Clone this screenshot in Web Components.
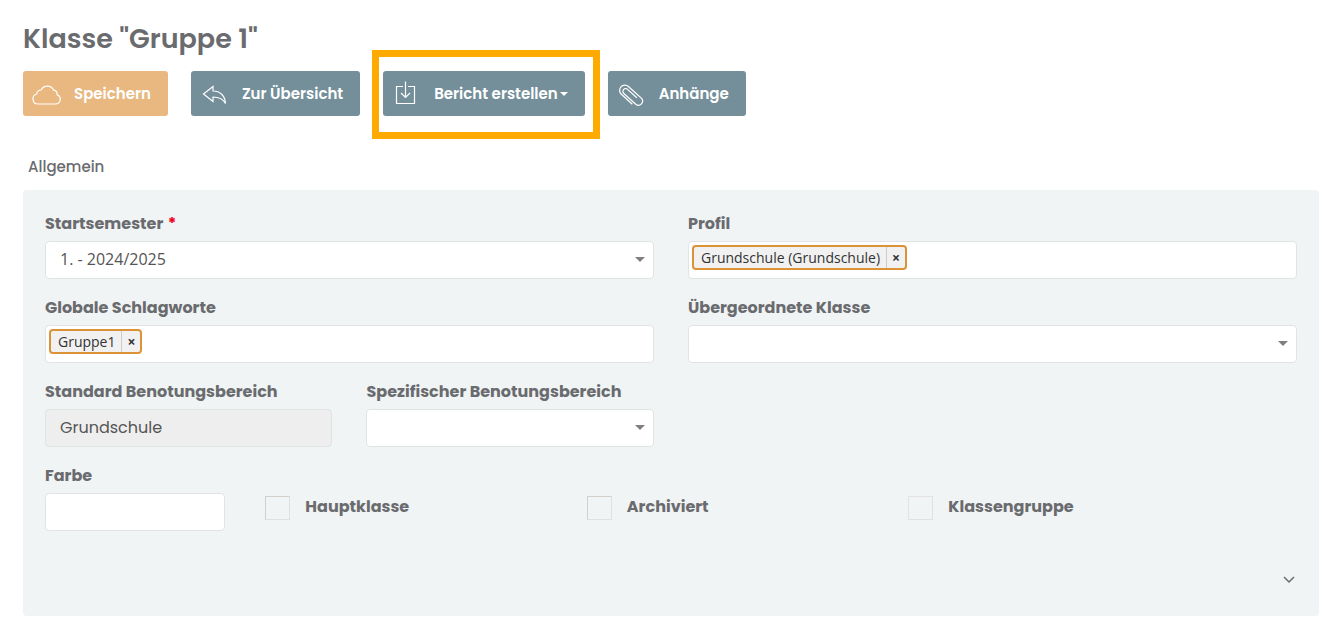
<!DOCTYPE html>
<html lang="de">
<head>
<meta charset="utf-8">
<meta name="viewport" content="width=device-width, initial-scale=1">
<title>Klasse "Gruppe 1"</title>
<style>
    body {
        margin: 0;
        background: #fff;
        color: #6a6b6e;
        font-family: Poppins, Inter, sans-serif;
        font-size: 16px;
    }
</style>
</head>
<body>
<class-page>
    <span slot="title">Klasse "Gruppe 1"</span>

    <tool-button slot="tools" icon="cloud" variant="save">Speichern</tool-button>
    <tool-button slot="tools" icon="back">Zur Übersicht</tool-button>
    <tool-button slot="tools" icon="download" caret marked>Bericht erstellen</tool-button>
    <tool-button slot="tools" icon="clip">Anhänge</tool-button>

    <form-panel heading="Allgemein">
        <select-field label="Startsemester" value="1. - 2024/2025" required></select-field>
        <tag-field label="Profil" tag="Grundschule (Grundschule)"></tag-field>
        <tag-field label="Globale Schlagworte" tag="Gruppe1"></tag-field>
        <select-field label="Übergeordnete Klasse"></select-field>
        <text-field class="quarter" label="Standard Benotungsbereich" value="Grundschule" disabled></text-field>
        <select-field class="quarter" label="Spezifischer Benotungsbereich"></select-field>
        <text-field class="small" label="Farbe"></text-field>
        <check-field class="quarter">Hauptklasse</check-field>
        <check-field class="quarter">Archiviert</check-field>
        <check-field class="quarter faint">Klassengruppe</check-field>
    </form-panel>
</class-page>

<script>
const icons = {
    cloud: `<path d="M6 25h17.500a4.800 4.800 0 0 0 1.600-9.300 4.200 4.200 0 0 0-3.400-4.500 7 7 0 0 0-12.600-.2 4.200 4.200 0 0 0-4.400 4A5.100 5.100 0 0 0 6 25z"/>`,
    back: `<path d="M3.500 15 13 7.500V12c7 0 12 4.500 12.500 12.500C23 19.500 19 18 13 18v4.500z"/>`,
    download: `<path d="M11 7.500H4.500v17h18v-17H16M13.500 2.500v16M9 14l4.500 4.500L18 14"/>`,
    clip: `<path transform="translate(7.500 4) rotate(42)" d="M20 10.500H5.200a5.200 5.200 0 0 1 0-10.500H23a4.200 4.200 0 0 1 0 8.300H6.500a2.800 2.800 0 0 1 0-5.600H19"/>`
};

class ClassPage extends HTMLElement {
    constructor () {
        super();
        this.attachShadow({ mode: 'open' }).innerHTML = `
            <style>
                :host {
                    display: block;
                    padding: 19px 22px 18px 23px;
                }

                h1 {
                    margin: 0 0 12px;
                    font-size: 27px;
                    font-weight: 600;
                    line-height: 40px;
                }

                .tools {
                    display: flex;
                    flex-wrap: wrap;
                    gap: 23px;
                    margin-bottom: 39px;
                }
            </style>
            <h1><slot name="title"></slot></h1>
            <div class="tools"><slot name="tools"></slot></div>
            <slot></slot>
        `;
    }
}

class ToolButton extends HTMLElement {
    constructor () {
        super();
        this.attachShadow({ mode: 'open' }).innerHTML = `
            <style>
                :host {
                    display: block;
                    position: relative;
                }

                button {
                    display: flex;
                    align-items: center;
                    gap: 12px;
                    height: 45px;
                    padding: 0 17px 0 9px;
                    border: 0;
                    border-radius: 3px;
                    background: #748f9a;
                    color: #fff;
                    font: inherit;
                    font-size: 15px;
                    font-weight: 600;
                    white-space: nowrap;
                    cursor: pointer;
                }

                :host([variant=save]) button {
                    background: #e9b780;
                }

                .icon {
                    width: 30px;
                    height: 30px;
                    fill: none;
                    stroke: #fff;
                    stroke-width: 1.200;
                }

                .text {
                    display: flex;
                    align-items: center;
                    gap: 2px;
                    line-height: 24px;
                }

                .caret {
                    border: 4px solid transparent;
                    border-top-color: #fff;
                    border-bottom: 0;
                }

                /* frame drawn around the button */
                .mark {
                    position: absolute;
                    inset: -21px -15px -23px -11px;
                    border: 7px solid #ffaa00;
                    pointer-events: none;
                }
            </style>
            <button type="button">
                <svg class="icon" viewBox="0 0 30 30" aria-hidden="true">${icons[this.getAttribute('icon')]}</svg>
                <span class="text"><slot></slot>${this.hasAttribute('caret') ? '<i class="caret"></i>' : ''}</span>
            </button>
            ${this.hasAttribute('marked') ? '<div class="mark"></div>' : ''}
        `;
    }
}

class FormPanel extends HTMLElement {
    constructor () {
        super();
        this.attachShadow({ mode: 'open' }).innerHTML = `
            <style>
                :host {
                    display: block;
                }

                h2 {
                    margin: 0 5px 11px;
                    font-size: 15px;
                    font-weight: 500;
                    line-height: 24px;
                }

                .panel {
                    padding: 23px 22px 25px;
                    border-radius: 4px;
                    background: #f0f4f5;
                }

                .grid {
                    display: grid;
                    grid-template-columns: repeat(12, minmax(0, 1fr));
                    gap: 18px 34px;
                }

                ::slotted(*) {
                    grid-column: span 6;
                }

                ::slotted(.quarter) {
                    grid-column: span 3;
                }

                ::slotted(.small) {
                    grid-column: 1 / span 2;
                }

                .more {
                    display: block;
                    width: 16px;
                    height: 24px;
                    margin: 36px 0 0 auto;
                    padding: 0;
                    border: 0;
                    background: none;
                    cursor: pointer;
                }

                .more svg {
                    display: block;
                    width: 16px;
                    height: 24px;
                    fill: none;
                    stroke: #6a6b6e;
                    stroke-width: 1.500;
                }
            </style>
            <h2>${this.getAttribute('heading')}</h2>
            <div class="panel">
                <div class="grid"><slot></slot></div>
                <button class="more" type="button" aria-label="Mehr">
                    <svg viewBox="0 0 16 24"><path d="m3 10 5 5 5-5"/></svg>
                </button>
            </div>
        `;
    }
}

const fieldStyle = `
    :host {
        display: block;
    }

    label {
        display: block;
        margin-bottom: 7px;
        font-weight: 700;
        line-height: 21px;
    }

    .required {
        margin-left: 1px;
        color: #f00020;
    }

    .control {
        box-sizing: border-box;
        width: 100%;
        height: 38px;
        padding: 0 14px;
        border: 1px solid #e1e4e5;
        border-radius: 4px;
        background: #fff;
        color: #555;
        font: inherit;
    }
`;

class FormField extends HTMLElement {
    constructor () {
        super();
        const star = this.hasAttribute('required') ? ' <span class="required">*</span>' : '';
        this.attachShadow({ mode: 'open' }).innerHTML = `
            <style>${fieldStyle}</style>
            <label for="field">${this.getAttribute('label')}${star}</label>
            ${this.control(this.getAttribute('value') || '')}
        `;
    }
}

class TextField extends FormField {
    control (value) {
        return `
            <style>
                .control:disabled {
                    padding-bottom: 2px;
                    background: #eee;
                }
            </style>
            <input class="control" id="field" type="text" value="${value}" ${this.hasAttribute('disabled') ? 'disabled' : ''}>
        `;
    }
}

class SelectField extends FormField {
    control (value) {
        return `
            <style>
                .box {
                    display: grid;
                    align-items: center;
                }

                .box > * {
                    grid-area: 1 / 1;
                }

                .box select {
                    appearance: none;
                    padding-bottom: 2px;
                    font-family: "Open Sans", sans-serif;
                }

                .arrow {
                    justify-self: end;
                    margin: 0 9px 2px 0;
                    border: 5px solid transparent;
                    border-top-color: #808080;
                    border-bottom: 0;
                    pointer-events: none;
                }
            </style>
            <div class="box">
                <select class="control" id="field"><option>${value}</option></select>
                <i class="arrow"></i>
            </div>
        `;
    }
}

class TagField extends FormField {
    control () {
        return `
            <style>
                .tags {
                    display: flex;
                    align-items: flex-start;
                    gap: 4px;
                    padding: 3px;
                }

                .tag {
                    display: flex;
                    border: 2px solid #dc9237;
                    border-radius: 4px;
                    background: #f1f1f1;
                    color: #333;
                    font: 14px/21px "Open Sans", sans-serif;
                    white-space: nowrap;
                }

                .tag span {
                    padding: 0 6px 0 7px;
                }

                .tag button {
                    width: 19px;
                    padding: 0;
                    border: 0;
                    border-left: 1px solid #ccc;
                    background: none;
                    color: #333;
                    font: inherit;
                    font-weight: 700;
                    cursor: pointer;
                }

                input {
                    flex: 1;
                    min-width: 0;
                    height: 24px;
                    padding: 0;
                    border: 0;
                    outline: 0;
                    background: none;
                    font: inherit;
                }
            </style>
            <div class="control tags">
                <div class="tag">
                    <span>${this.getAttribute('tag')}</span>
                    <button type="button">×</button>
                </div>
                <input id="field" type="text">
            </div>
        `;
    }
}

class CheckField extends HTMLElement {
    constructor () {
        super();
        this.attachShadow({ mode: 'open' }).innerHTML = `
            <style>
                :host {
                    display: flex;
                    align-items: flex-start;
                    gap: 15px;
                    padding: 31px 0 0 6px;
                    --edge: #d3d0cc;
                }

                :host(.faint) {
                    --edge: #e3e2e0;
                }

                input {
                    appearance: none;
                    box-sizing: border-box;
                    width: 25px;
                    height: 24px;
                    margin: 0;
                    border: 1px solid #dfe0df;
                    border-top-color: var(--edge);
                    border-left-color: var(--edge);
                }

                label {
                    font-weight: 700;
                    line-height: 21px;
                }
            </style>
            <input id="check" type="checkbox">
            <label for="check"><slot></slot></label>
        `;
    }
}

customElements.define('class-page', ClassPage);
customElements.define('tool-button', ToolButton);
customElements.define('form-panel', FormPanel);
customElements.define('text-field', TextField);
customElements.define('select-field', SelectField);
customElements.define('tag-field', TagField);
customElements.define('check-field', CheckField);
</script>
</body>
</html>
